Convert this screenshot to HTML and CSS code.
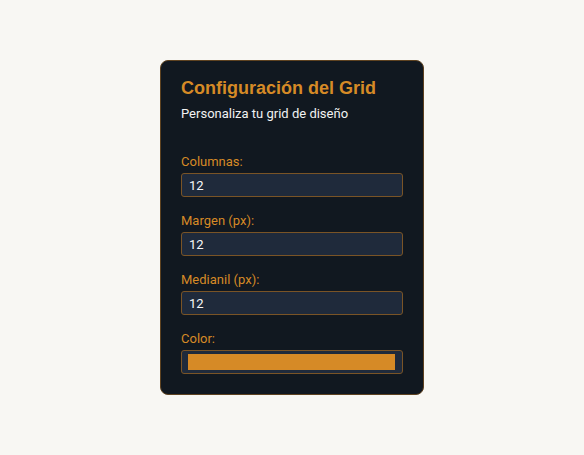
FILE: index.html
```html
<!DOCTYPE html>
<html lang="es">
<head>
    <meta charset="UTF-8">
    <meta name="viewport" content="width=device-width, initial-scale=1.0">
    <title>Configuración del Grid</title>
    <link rel="stylesheet" href="styles.css">
</head>
<body>
    <div class="panel">
        <h2 class="panel-title">Configuración del Grid</h2>
        <p class="panel-subtitle">Personaliza tu grid de diseño</p>

        <div class="field">
            <label for="columns">Columnas:</label>
            <input class="field-input" type="number" id="columns" value="12">
        </div>
        <div class="field">
            <label for="margin">Margen (px):</label>
            <input class="field-input" type="number" id="margin" value="12">
        </div>
        <div class="field">
            <label for="gutter">Medianil (px):</label>
            <input class="field-input" type="number" id="gutter" value="12">
        </div>
        <div class="field">
            <label for="color">Color:</label>
            <input class="field-input color-input" type="color" id="color" value="#d68a26">
        </div>
    </div>
</body>
</html>
```

FILE: styles.css
```css
body {
    margin: 0;
    background: #f8f7f3;
    font-family: Roboto, "Liberation Sans", sans-serif;
}

.panel {
    box-sizing: border-box;
    width: 264px;
    margin: 60px auto 0;
    padding: 16px 20px 20px;
    background: #111820;
    border: 1px solid #5e4220;
    border-radius: 8px;
}

.panel-title {
    margin: 0;
    font-family: "Liberation Sans", Arial, sans-serif;
    font-size: 18px;
    line-height: 22px;
    font-weight: bold;
    color: #d68a26;
}

.panel-subtitle {
    margin: 7px 0 32px;
    font-size: 13px;
    line-height: 16px;
    color: #f2f2f2;
}

.field {
    margin-bottom: 16px;
}

.field:last-child {
    margin-bottom: 0;
}

.field label {
    display: block;
    margin-bottom: 4px;
    font-size: 13px;
    line-height: 15px;
    color: #d68a26;
}

.field-input {
    box-sizing: border-box;
    display: block;
    width: 222px;
    height: 24px;
    margin: 0;
    padding: 0 7px;
    background: #1f2a3b;
    border: 1px solid #7a5426;
    border-radius: 3px;
    font-family: Roboto, "Liberation Sans", sans-serif;
    font-size: 13px;
    color: #f7f7f7;
    outline: none;
    -moz-appearance: textfield;
}

.field-input::-webkit-inner-spin-button,
.field-input::-webkit-outer-spin-button {
    -webkit-appearance: none;
    margin: 0;
}

.color-input {
    -webkit-appearance: none;
    appearance: none;
    padding: 3px 7px 3px 6px;
    cursor: pointer;
}

.color-input::-webkit-color-swatch-wrapper {
    padding: 0;
}

.color-input::-webkit-color-swatch {
    border: none;
    border-radius: 0;
}
```
